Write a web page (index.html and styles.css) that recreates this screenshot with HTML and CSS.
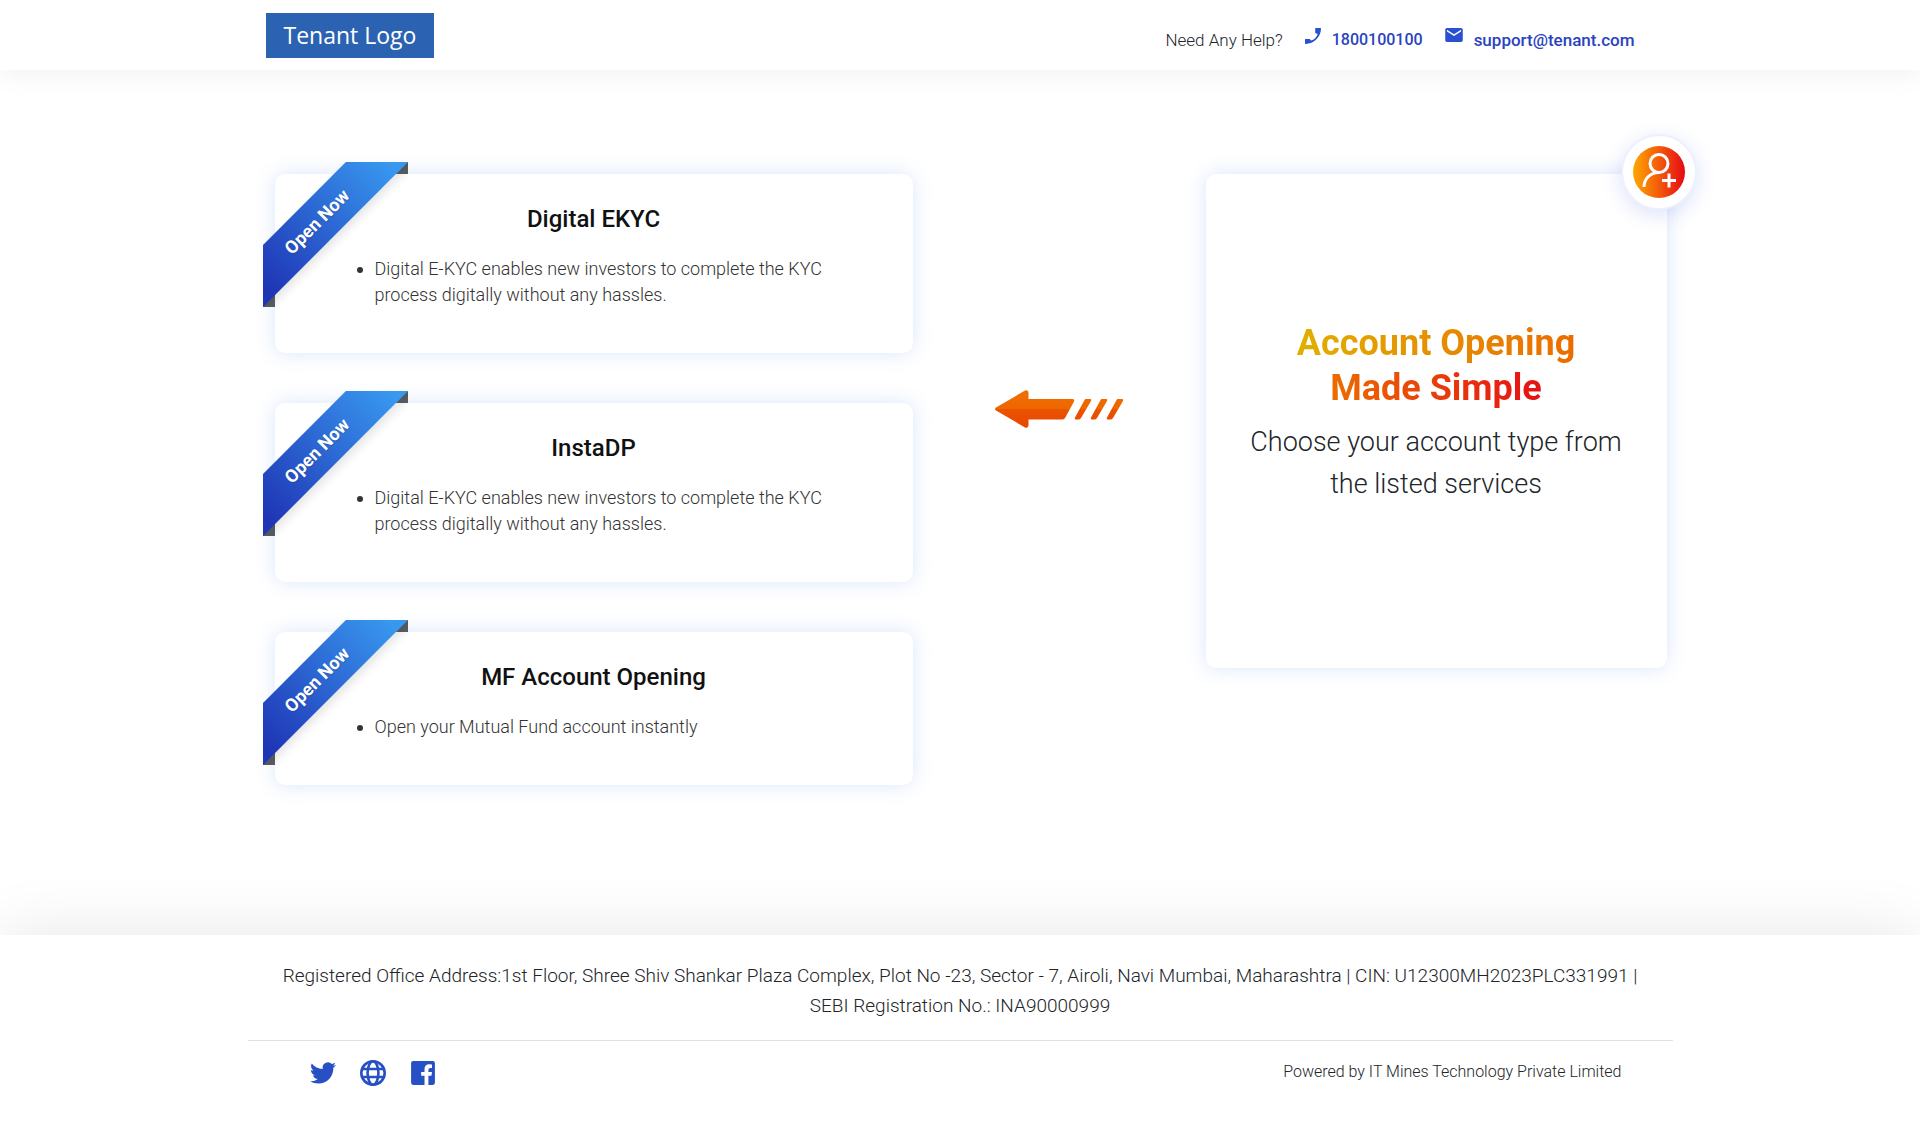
FILE: index.html
```html
<!DOCTYPE html>
<html lang="en">
<head>
<meta charset="utf-8">
<meta name="viewport" content="width=device-width, initial-scale=1">
<title>Account Opening</title>
<link rel="stylesheet" href="styles.css">
</head>
<body>
<header class="header">
  <div class="container header-inner">
    <a class="logo" href="#">Tenant Logo</a>
    <div class="help">
      <span class="help-label">Need Any Help?</span>
      <a class="help-link help-phone" href="tel:1800100100">
        <svg class="phone-icon" viewBox="0 0 16 16" aria-hidden="true"><path d="M10.800 0H15.500Q16 0 16 .6C16 9 9 16 .6 16Q0 16 0 15.400V11.600Q0 11.100 .6 11H4.600Q5.100 11 5.300 11.500L5.900 12.600C9.300 11.500 11.600 9.200 12.700 5.900L10.700 5.300Q10.200 5 10.200 4.500V.6Q10.200 0 10.800 0Z"/></svg>
        <span>1800100100</span>
      </a>
      <a class="help-link" href="mailto:support@tenant.com">
        <svg class="mail-icon" viewBox="2 4 20 16" aria-hidden="true"><path d="M20 4H4c-1.100 0-2 .9-2 2v12c0 1.100.9 2 2 2h16c1.100 0 2-.9 2-2V6c0-1.100-.9-2-2-2zm0 4l-8 5-8-5V6l8 5 8-5v2z"/></svg>
        <span>support@tenant.com</span>
      </a>
    </div>
  </div>
</header>

<main class="container main">
  <section class="services">
    <article class="card">
      <div class="ribbon"><a class="ribbon-band" href="#">Open Now</a></div>
      <h2 class="card-title">Digital EKYC</h2>
      <ul class="card-list"><li>Digital E-KYC enables new investors to complete the KYC process digitally without any hassles.</li></ul>
    </article>
    <article class="card">
      <div class="ribbon"><a class="ribbon-band" href="#">Open Now</a></div>
      <h2 class="card-title">InstaDP</h2>
      <ul class="card-list"><li>Digital E-KYC enables new investors to complete the KYC process digitally without any hassles.</li></ul>
    </article>
    <article class="card">
      <div class="ribbon"><a class="ribbon-band" href="#">Open Now</a></div>
      <h2 class="card-title">MF Account Opening</h2>
      <ul class="card-list"><li>Open your Mutual Fund account instantly</li></ul>
    </article>
  </section>

  <svg class="arrow" viewBox="0 0 128 38" aria-hidden="true">
    <defs>
      <linearGradient id="arrowFill" gradientUnits="userSpaceOnUse" x1="0" y1="0" x2="0" y2="38">
        <stop offset="0" stop-color="#ef6f00"/><stop offset=".5" stop-color="#ee6600"/>
        <stop offset=".5" stop-color="#ea5300"/><stop offset="1" stop-color="#e84600"/>
      </linearGradient>
    </defs>
    <path fill="url(#arrowFill)" d="M1 17.500L30 .6Q33 -.5 33.500 2.500V9H77Q80 9 79 11.500L70 28Q69 29.500 67 29.500H33.500V35.500Q33 38.500 30 37.400L1 20.500Q-1 19 1 17.500Z"/>
    <path fill="url(#arrowFill)" d="M91 9H95Q97 9 96 11L86 28Q85 29.500 83.500 29.500H81Q79 29.500 80 27.500L89.500 10Q90 9 91 9ZM107 9H111Q113 9 112 11L102 28Q101 29.500 99.500 29.500H97Q95 29.500 96 27.500L105.500 10Q106 9 107 9ZM123 9H127Q129 9 128 11L118 28Q117 29.500 115.500 29.500H113Q111 29.500 112 27.500L121.500 10Q122 9 123 9Z"/>
  </svg>

  <section class="intro">
    <div class="badge">
      <svg viewBox="0 0 52 52" aria-hidden="true">
        <defs><linearGradient id="badgeFill"><stop offset="0" stop-color="#fda800"/><stop offset=".5" stop-color="#f35a0c"/><stop offset="1" stop-color="#e50914"/></linearGradient></defs>
        <circle cx="26" cy="26" r="26" fill="url(#badgeFill)"/>
        <g fill="none" stroke="#fff" stroke-width="3">
          <circle cx="26" cy="17.500" r="9"/>
          <path d="M11 41C11 33 17 26.500 26 26.500M36 27.500V41.500M29 34.500H43"/>
        </g>
      </svg>
    </div>
    <h1 class="intro-title"><span>Account Opening<br>Made Simple</span></h1>
    <p class="intro-text">Choose your account type from the listed services</p>
  </section>
</main>

<footer class="footer">
  <div class="container">
    <p class="address">Registered Office Address:1st Floor, Shree Shiv Shankar Plaza Complex, Plot No -23, Sector - 7, Airoli, Navi Mumbai, Maharashtra | CIN: U12300MH2023PLC331991 | SEBI Registration No.: INA90000999</p>
    <div class="footer-row">
      <nav class="social" aria-label="Social links">
        <a href="#" aria-label="Twitter"><svg viewBox="0 0 24 24"><path d="M23.953 4.570a10 10 0 01-2.825.775 4.958 4.958 0 002.163-2.723c-.951.555-2.005.959-3.127 1.184a4.920 4.920 0 00-8.384 4.482C7.690 8.095 4.067 6.130 1.640 3.162a4.822 4.822 0 00-.666 2.475c0 1.710.87 3.213 2.188 4.096a4.904 4.904 0 01-2.228-.616v.06a4.923 4.923 0 003.946 4.827 4.996 4.996 0 01-2.212.085 4.936 4.936 0 004.604 3.417 9.867 9.867 0 01-6.102 2.105c-.39 0-.779-.023-1.170-.067a13.995 13.995 0 007.557 2.209c9.053 0 13.998-7.496 13.998-13.985 0-.21 0-.42-.015-.63A9.935 9.935 0 0024 4.590z"/></svg></a>
        <a href="#" aria-label="Website"><svg viewBox="0 0 24 24"><g fill="none" stroke="#2650c4" stroke-width="2.400"><circle cx="12" cy="12" r="10.800"/><ellipse cx="12" cy="12" rx="5" ry="10.800"/><path d="M2 8.300H22M2 15.700H22"/></g></svg></a>
        <a href="#" aria-label="Facebook"><svg viewBox="0 0 24 24"><path d="M3 1H21Q23 1 23 3V21Q23 23 21 23H17V14.500H19.800L20.300 11H17V9Q17 7.300 18.800 7.300H20.300V4.200Q19.200 4 17.800 4Q13.400 4 13.400 8.400V11H10.300V14.500H13.400V23H3Q1 23 1 21V3Q1 1 3 1Z"/></svg></a>
      </nav>
      <span class="powered">Powered by IT Mines Technology Private Limited</span>
    </div>
  </div>
</footer>
</body>
</html>
```
FILE: styles.css
```css
* { box-sizing: border-box; }

body {
  margin: 0;
  min-height: 100vh;
  display: flex;
  flex-direction: column;
  background: #fff;
  color: #212529;
  font-family: Roboto, "Liberation Sans", sans-serif;
  font-weight: 300;
}

h1, h2, p, ul { margin: 0; padding: 0; }
a { color: inherit; text-decoration: none; }

.container {
  width: 100%;
  max-width: 1425px;
  margin: 0 auto;
}

.header {
  background: #fff;
  box-shadow: 0 0 30px rgba(0, 0, 0, .08);
}

.header-inner {
  display: flex;
  justify-content: space-between;
  align-items: center;
  padding: 13px 38px 12px 18px;
}

.logo {
  padding: 0 18px;
  background: #2c62b2;
  color: #fff;
  font: 400 23px/45px "Open Sans", "Noto Sans", sans-serif;
}

.help {
  display: flex;
  align-items: center;
  gap: 22px;
  padding-top: 8px;
  font-size: 17px;
  line-height: 20px;
}

.help-link {
  display: flex;
  gap: 11px;
  color: #2a43c0;
  font-size: 17px;
  font-weight: 500;
}

.help-phone { font-size: 16px; }

.help-link svg {
  margin-top: -2px;
  fill: #2a4fd0;
}

.phone-icon { width: 16px; height: 16px; }
.mail-icon { width: 18px; height: 14px; }

.main {
  flex: 1;
  display: grid;
  grid-template-columns: 638fr 293fr 461fr;
  align-items: start;
  padding: 104px 6px 150px 27px;
}

.services {
  display: flex;
  flex-direction: column;
  gap: 50px;
}

.card, .intro {
  position: relative;
  background: #fff;
  border-radius: 10px;
  box-shadow: 0 0 20px rgba(60, 120, 230, .19);
}

.card { padding: 27px 40px 45px 100px; }

.card-title {
  margin: 0 -40px 19px -100px;
  color: #111;
  font-size: 24px;
  font-weight: 500;
  line-height: 36px;
  text-align: center;
}

.card-list {
  color: #333;
  font-size: 18px;
  line-height: 26px;
}

.ribbon {
  position: absolute;
  top: -12px;
  left: -12px;
  width: 145px;
  height: 145px;
  overflow: hidden;
}

.ribbon::before, .ribbon::after {
  content: "";
  position: absolute;
  width: 12px;
  height: 12px;
  background: #5a5f66;
}

.ribbon::before { top: 0; right: 0; }
.ribbon::after { bottom: 0; left: 0; }

.ribbon-band {
  position: absolute;
  z-index: 1;
  top: 35px;
  left: -53px;
  width: 220px;
  padding-right: 8px;
  background: linear-gradient(90deg, #1f35b5 10%, #3897ef 90%);
  box-shadow: 0 5px 10px rgba(0, 0, 0, .1);
  color: #fff;
  font-size: 18px;
  font-weight: 700;
  line-height: 44px;
  text-align: center;
  text-shadow: 0 1px 1px rgba(0, 0, 0, .2);
  transform: rotate(-45deg);
}

.arrow {
  justify-self: center;
  width: 128px;
  height: 38px;
  margin-top: 216px;
}

.intro {
  min-height: 494px;
  padding: 147px 32px 32px;
  text-align: center;
}

.intro-title {
  font-size: 36px;
  font-weight: 700;
  line-height: 45px;
}

.intro-title span {
  background: linear-gradient(90deg, #e0b000, #ec6a00 58%, #e60f14);
  -webkit-background-clip: text;
  background-clip: text;
  color: transparent;
}

.intro-text {
  margin-top: 10px;
  font-size: 27px;
  line-height: 42px;
}

.badge {
  position: absolute;
  top: -40px;
  right: -30px;
  display: grid;
  place-items: center;
  width: 76px;
  height: 76px;
  border: 2px solid #edf0fd;
  border-radius: 50%;
  background: #fff;
  box-shadow: 0 5px 20px rgba(60, 90, 230, .18);
}

.badge svg { width: 52px; height: 52px; }

.footer {
  background: #fff;
  box-shadow: 0 0 60px rgba(0, 0, 0, .1);
}

.address {
  padding: 26px 16px 19px;
  border-bottom: 1px solid #dee2e6;
  font-size: 19px;
  line-height: 30px;
  text-align: center;
}

.footer-row {
  display: flex;
  justify-content: space-between;
  align-items: flex-start;
  padding: 19px 51px 40px 62px;
}

.social { display: flex; gap: 24px; }
.social svg { display: block; width: 26px; height: 26px; fill: #2650c4; }

.powered { font-size: 16px; line-height: 24px; }

@media (max-width: 1100px) {
  .main { grid-template-columns: 1fr; gap: 50px; padding: 60px 40px; }
  .arrow { margin-top: 0; transform: rotate(90deg); }
}
```
